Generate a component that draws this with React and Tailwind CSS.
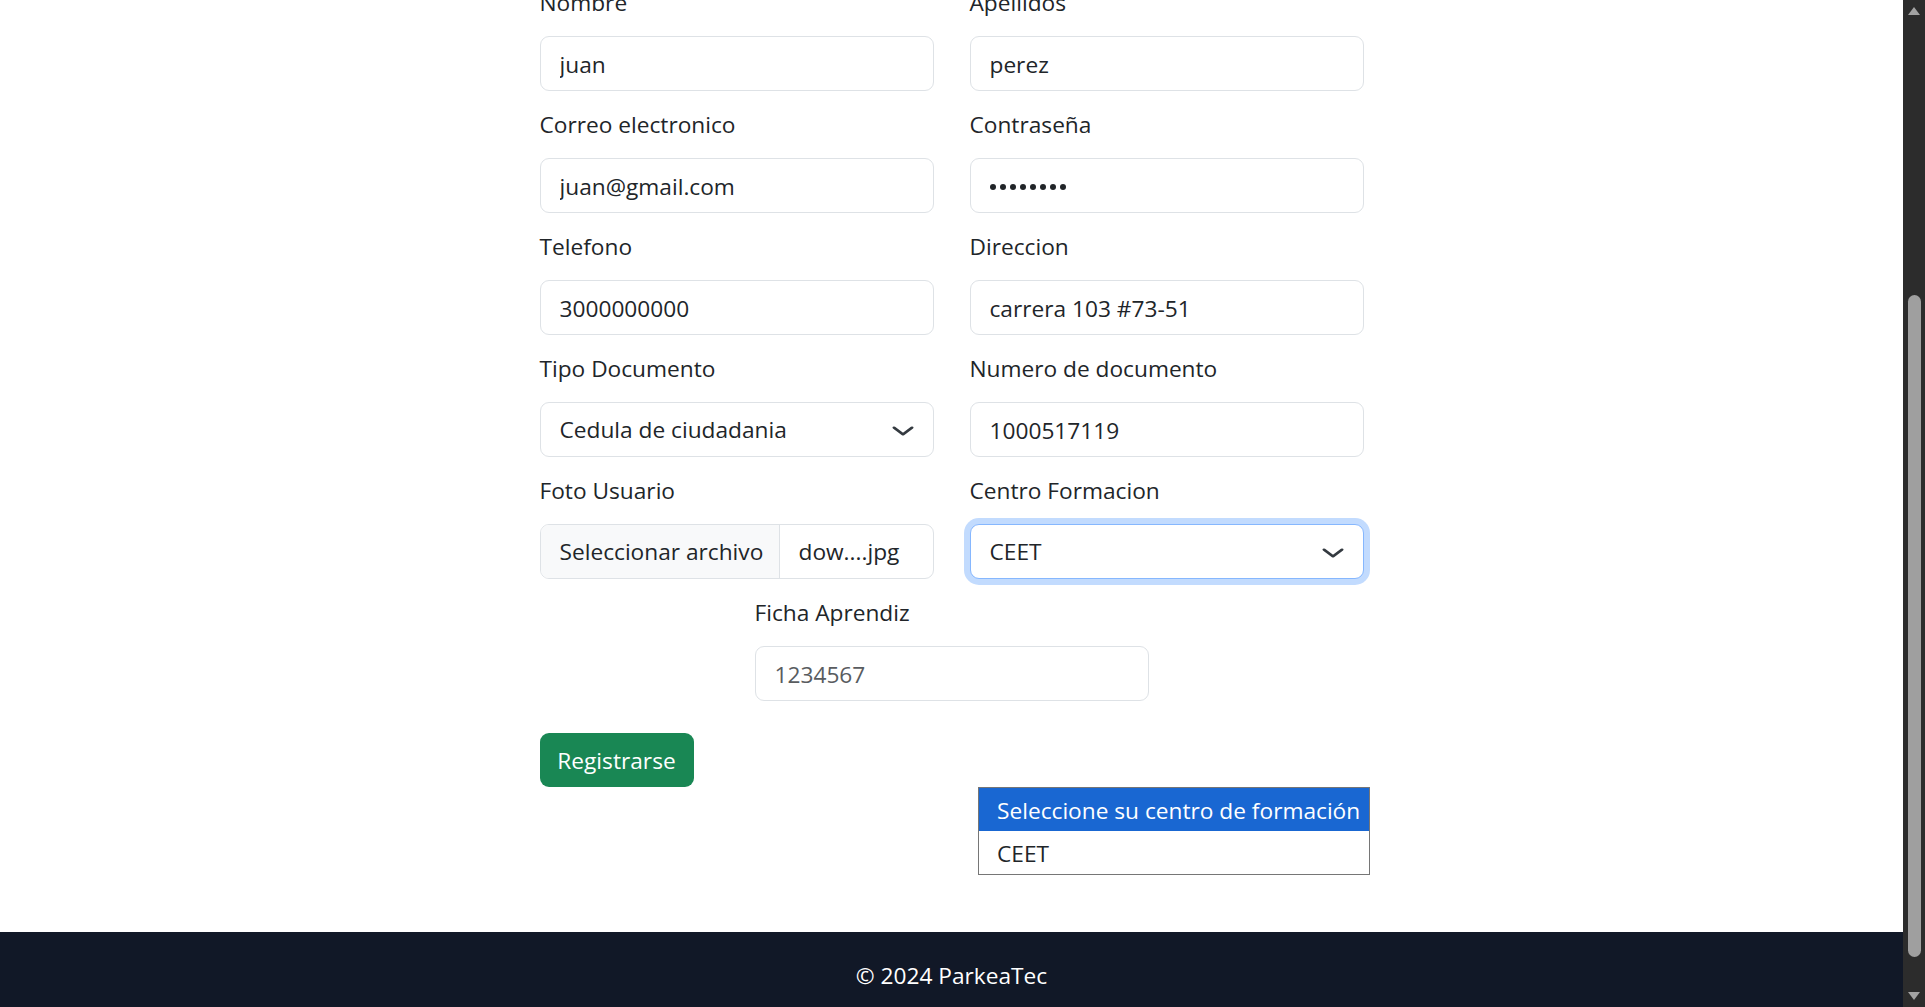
import React from 'react';

const labelCls = 'block leading-[36px] pt-[2px] mb-[15px] text-[#212529]';
const boxCls =
  'h-[55px] w-full rounded-[9px] border border-[#dee2e6] bg-white px-[19px] pt-[2px] text-[22.7px] text-[#212529] outline-none';

function Chevron() {
  return (
    <svg viewBox="0 0 16 16" preserveAspectRatio="none" className="w-[24px] h-[18px] shrink-0" fill="none">
      <path d="m2 5 6 6 6-6" stroke="#343a40" strokeWidth="2" strokeLinecap="round" strokeLinejoin="round" />
    </svg>
  );
}

function Field({ label, value, type }) {
  return (
    <div className="mb-[14px]">
      <label className={labelCls}>{label}</label>
      {type === 'password' ? (
        <div className={boxCls + ' flex items-center gap-[4px]'}>
          {Array.from({ length: 8 }).map((_, i) => (
            <span key={i} className="w-[6px] h-[6px] rounded-full bg-[#212529]" />
          ))}
        </div>
      ) : (
        <input readOnly defaultValue={value} className={boxCls} />
      )}
    </div>
  );
}

function SelectBox({ label, value, focused }) {
  return (
    <div className="mb-[14px]">
      <label className={labelCls}>{label}</label>
      <div
        className={
          'h-[55px] w-full rounded-[9px] border bg-white pl-[19px] pr-[18px] pt-[2px] flex items-center justify-between ' +
          (focused
            ? 'border-[#86b7fe] shadow-[0_0_0_6px_rgba(13,110,253,0.25)]'
            : 'border-[#dee2e6]')
        }
      >
        <span>{value}</span>
        <Chevron />
      </div>
    </div>
  );
}

function FileBox() {
  return (
    <div className="mb-[14px]">
      <label className={labelCls}>Foto Usuario</label>
      <div className="h-[55px] w-full rounded-[9px] border border-[#dee2e6] bg-white flex overflow-hidden">
        <div className="w-[239px] shrink-0 bg-[#f8f9fa] border-r border-[#dee2e6] flex items-center pl-[19px] pt-[2px] whitespace-nowrap">
          Seleccionar archivo
        </div>
        <div className="flex items-center pl-[19px] pt-[2px]">dow....jpg</div>
      </div>
    </div>
  );
}

function Scrollbar() {
  return (
    <div className="w-[22px] shrink-0 bg-[#2c2c2c] flex flex-col items-center">
      <div className="h-[22px] flex items-center justify-center">
        <svg viewBox="0 0 12 8" className="w-[12px] h-[8px]">
          <path d="M6 0 12 8H0z" fill="#a3a3a3" />
        </svg>
      </div>
      <div className="h-[273px]" />
      <div className="w-[13px] h-[662px] rounded-full bg-[#9f9f9f]" />
      <div className="flex-1" />
      <div className="h-[22px] flex items-center justify-center">
        <svg viewBox="0 0 12 8" className="w-[12px] h-[8px]">
          <path d="M0 0h12L6 8z" fill="#a3a3a3" />
        </svg>
      </div>
    </div>
  );
}

export default function App() {
  return (
    <div className="h-[1007px] w-full overflow-hidden flex bg-white font-['Open_Sans',sans-serif] text-[22.7px] text-[#212529]">
      <div className="relative flex-1 flex flex-col">
        <main className="flex-1">
          <form className="w-[824px] mx-auto -mt-[17px]">
            <div className="grid grid-cols-2 gap-x-[36px]">
              <Field label="Nombre" value="juan" />
              <Field label="Apellidos" value="perez" />
              <Field label="Correo electronico" value="juan@gmail.com" />
              <Field label="Contraseña" type="password" />
              <Field label="Telefono" value="3000000000" />
              <Field label="Direccion" value="carrera 103 #73-51" />
              <SelectBox label="Tipo Documento" value="Cedula de ciudadania" />
              <Field label="Numero de documento" value="1000517119" />
              <FileBox />
              <SelectBox label="Centro Formacion" value="CEET" focused />
            </div>
            <div className="flex justify-center">
              <div className="w-[394px] mb-[14px]">
                <label className={labelCls}>Ficha Aprendiz</label>
                <input readOnly placeholder="1234567" className={boxCls + ' placeholder:text-[#595c5f]'} />
              </div>
            </div>
            <button
              type="button"
              className="mt-[18px] h-[54px] w-[154px] rounded-[9px] bg-[#198754] pt-[2px] text-white text-[22.7px]"
            >
              Registrarse
            </button>
          </form>
        </main>
        <footer className="h-[75px] bg-[#111827] text-white text-center pt-[26px] leading-[36px]">
          © 2024 ParkeaTec
        </footer>

        <div className="absolute left-[978px] top-[787px] w-[392px] border border-[#767676] bg-white">
          <div className="h-[43px] bg-[#1967d2] text-white flex items-center pl-[18px] pt-[3px] whitespace-nowrap">
            Seleccione su centro de formación
          </div>
          <div className="h-[43px] flex items-center pl-[18px] pt-[3px]">CEET</div>
        </div>
      </div>
      <Scrollbar />
    </div>
  );
}
